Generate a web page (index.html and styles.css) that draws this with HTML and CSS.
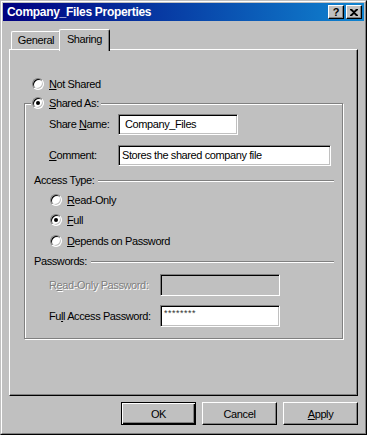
FILE: index.html
```html
<!DOCTYPE html>
<html lang="en">
<head>
    <meta charset="UTF-8">
    <meta name="viewport" content="width=device-width, initial-scale=1.0">
    <title>Company_Files Properties</title>

    <link rel="stylesheet" href="styles.css">
</head>
<body>

<div class="window">
    <div class="frame">

        <!-- Title bar -->
        <div class="titlebar">
            <span class="title">Company_Files Properties</span>
            <div class="title-buttons">
                <span class="tbtn help">?</span>
                <span class="tbtn">
                    <svg width="8" height="7" viewBox="0 0 8 7"><path d="M0 0h2l2 2 2-2h2v1L5 3.5 8 6v1H6L4 5 2 7H0V6l3-2.5L0 1z" fill="#000"/></svg>
                </span>
            </div>
        </div>

        <!-- Tabs -->
        <div class="tabs">
            <div class="tab">General</div>
            <div class="tab active">Sharing</div>
        </div>

        <div class="panel">
            <div class="radio-row not-shared">
                <span class="radio"></span><span><u>N</u>ot Shared</span>
            </div>

            <div class="group">
                <div class="radio-row legend">
                    <span class="radio checked"></span><span><u>S</u>hared As:</span>
                </div>

                <div class="field-row share-row">
                    <span class="field-label">Share <u>N</u>ame:</span>
                    <div class="field name-field">Company_Files</div>
                </div>

                <div class="field-row comment-row">
                    <span class="field-label"><u>C</u>omment:</span>
                    <div class="field comment-field">Stores the shared company file</div>
                </div>

                <div class="sep-row access-sep">
                    <span>Access Type:</span><div class="sep"></div>
                </div>

                <div class="radio-row sub-radio first">
                    <span class="radio"></span><span><u>R</u>ead-Only</span>
                </div>
                <div class="radio-row sub-radio">
                    <span class="radio checked"></span><span><u>F</u>ull</span>
                </div>
                <div class="radio-row sub-radio third">
                    <span class="radio"></span><span><u>D</u>epends on Password</span>
                </div>

                <div class="sep-row pass-sep">
                    <span>Passwords:</span><div class="sep"></div>
                </div>

                <div class="field-row pass-row">
                    <span class="field-label pass-label disabled">R<u>e</u>ad-Only Password:</span>
                    <div class="field pass-field off"></div>
                </div>
                <div class="field-row pass-row second">
                    <span class="field-label pass-label">Fu<u>l</u>l Access Password:</span>
                    <div class="field pass-field"><span class="stars">********</span></div>
                </div>
            </div>
        </div>

        <!-- Dialog buttons -->
        <div class="buttons">
            <div class="btn default">OK</div>
            <div class="btn">Cancel</div>
            <div class="btn"><span><u>A</u>pply</span></div>
        </div>

    </div>
</div>

</body>
</html>
```

FILE: styles.css
```css
body {
    margin: 0;
    font-family: "Liberation Sans", Arial, sans-serif;
    font-size: 11px;
    letter-spacing: -0.4px;
    line-height: 13px;
    color: #000;
    background-color: #c0c0c0;
}

u {
    text-decoration: underline;
    text-underline-offset: 1px;
}

/* Window frame */
.window {
    width: 367px;
    height: 435px;
    box-sizing: border-box;
    border: 1px solid;
    border-color: #c0c0c0 #000 #000 #c0c0c0;
    background-color: #c0c0c0;
}

.frame {
    height: 100%;
    box-sizing: border-box;
    border: 1px solid;
    border-color: #fff #808080 #808080 #fff;
    padding: 1px;
}

/* Title bar */
.titlebar {
    height: 18px;
    display: flex;
    align-items: center;
    justify-content: space-between;
    padding: 0 2px 0 4px;
    background: linear-gradient(to right, #000080, #1084d0);
}

.title {
    color: #fff;
    font-weight: bold;
    font-size: 12px;
    letter-spacing: -0.3px;
}

.title-buttons {
    display: flex;
    gap: 2px;
}

.tbtn {
    width: 16px;
    height: 14px;
    box-sizing: border-box;
    border: 1px solid;
    border-color: #fff #000 #000 #fff;
    box-shadow: inset -1px -1px #808080;
    background-color: #c0c0c0;
    display: flex;
    align-items: center;
    justify-content: center;
}

.tbtn.help {
    font-weight: bold;
    font-size: 11px;
    letter-spacing: 0;
    line-height: 11px;
}

/* Tabs */
.tabs {
    display: flex;
    height: 20px;
    margin-top: 8px;
    padding-left: 8px;
}

.tab {
    width: 50px;
    height: 18px;
    margin-top: 2px;
    box-sizing: border-box;
    border-top: 1px solid #fff;
    border-left: 1px solid #fff;
    border-right: 1px solid #000;
    border-radius: 2px 2px 0 0;
    box-shadow: inset -1px 0 #808080;
    text-align: center;
    line-height: 16px;
}

.tab.active {
    width: 51px;
    height: 22px;
    margin-top: 0;
    margin-left: -2px;
    line-height: 18px;
    background-color: #c0c0c0;
    position: relative;
    z-index: 1;
}

/* Tab page */
.panel {
    height: 347px;
    margin: 0 6px;
    box-sizing: border-box;
    border: 1px solid;
    border-color: #fff #000 #000 #fff;
    box-shadow: inset -1px -1px #808080;
}

.radio-row {
    display: flex;
    align-items: center;
    gap: 5px;
    height: 16px;
}

.radio {
    width: 12px;
    height: 12px;
    box-sizing: border-box;
    border-radius: 50%;
    border: 1px solid;
    border-color: #808080 #fff #fff #808080;
    box-shadow: inset 1px 1px #000, inset -1px -1px #c0c0c0;
    background-color: #fff;
    display: flex;
    align-items: center;
    justify-content: center;
    flex-shrink: 0;
}

.radio.checked:after {
    content: '';
    width: 4px;
    height: 4px;
    border-radius: 50%;
    background-color: #000;
}

.not-shared {
    margin-top: 26px;
    padding-left: 22px;
}

/* Shared As group */
.group {
    position: relative;
    width: 319px;
    height: 236px;
    margin: 11px 0 0 14px;
    box-sizing: border-box;
    border: 1px solid #808080;
    box-shadow: 1px 1px 0 #fff, inset 1px 1px 0 #fff;
    padding-top: 10px;
}

.legend {
    position: absolute;
    top: -9px;
    left: 6px;
    padding: 0 2px 0 1px;
    background-color: #c0c0c0;
}

.field-row {
    display: flex;
    align-items: center;
    padding-left: 24px;
}

.field-label {
    width: 69px;
    flex-shrink: 0;
}

.field {
    height: 21px;
    box-sizing: border-box;
    border: 1px solid;
    border-color: #808080 #fff #fff #808080;
    box-shadow: inset 1px 1px #000, inset -1px -1px #c0c0c0;
    background-color: #fff;
    padding: 3px 0 0 3px;
    white-space: nowrap;
    overflow: hidden;
}

.name-field {
    width: 120px;
    padding-left: 6px;
}

.comment-row {
    margin-top: 10px;
}

.comment-field {
    width: 213px;
}

.sep-row {
    display: flex;
    align-items: center;
    gap: 4px;
    height: 13px;
    margin: 0 8px 0 9px;
}

.sep {
    flex: 1;
    border-top: 1px solid #808080;
    border-bottom: 1px solid #fff;
}

.access-sep {
    margin-top: 8px;
}

.sub-radio {
    padding-left: 25px;
    margin-top: 4px;
}

.sub-radio.first {
    margin-top: 5px;
}

.sub-radio.third {
    margin-top: 5px;
}

.pass-sep {
    margin-top: 6px;
}

.pass-row {
    margin-top: 6px;
}

.pass-row.second {
    margin-top: 9px;
}

.pass-label {
    width: 111px;
}

.pass-field {
    width: 120px;
    height: 22px;
    padding-top: 3px;
}

.stars {
    font-size: 9px;
    letter-spacing: 0.5px;
    line-height: 9px;
    color: #333;
    vertical-align: top;
}

.pass-field.off {
    background-color: #c0c0c0;
}

.disabled {
    color: #808080;
    text-shadow: 1px 1px 0 #fff;
}

/* Bottom buttons */
.buttons {
    display: flex;
    justify-content: flex-end;
    gap: 6px;
    margin: 6px 6px 0 0;
}

.btn {
    width: 75px;
    height: 23px;
    box-sizing: border-box;
    border: 1px solid;
    border-color: #fff #000 #000 #fff;
    box-shadow: inset -1px -1px #808080;
    display: flex;
    align-items: center;
    justify-content: center;
    padding-top: 1px;
}

.btn.default {
    border-color: #000;
    box-shadow: inset 1px 1px #fff, inset -1px -1px #000, inset -2px -2px #808080;
}
```
